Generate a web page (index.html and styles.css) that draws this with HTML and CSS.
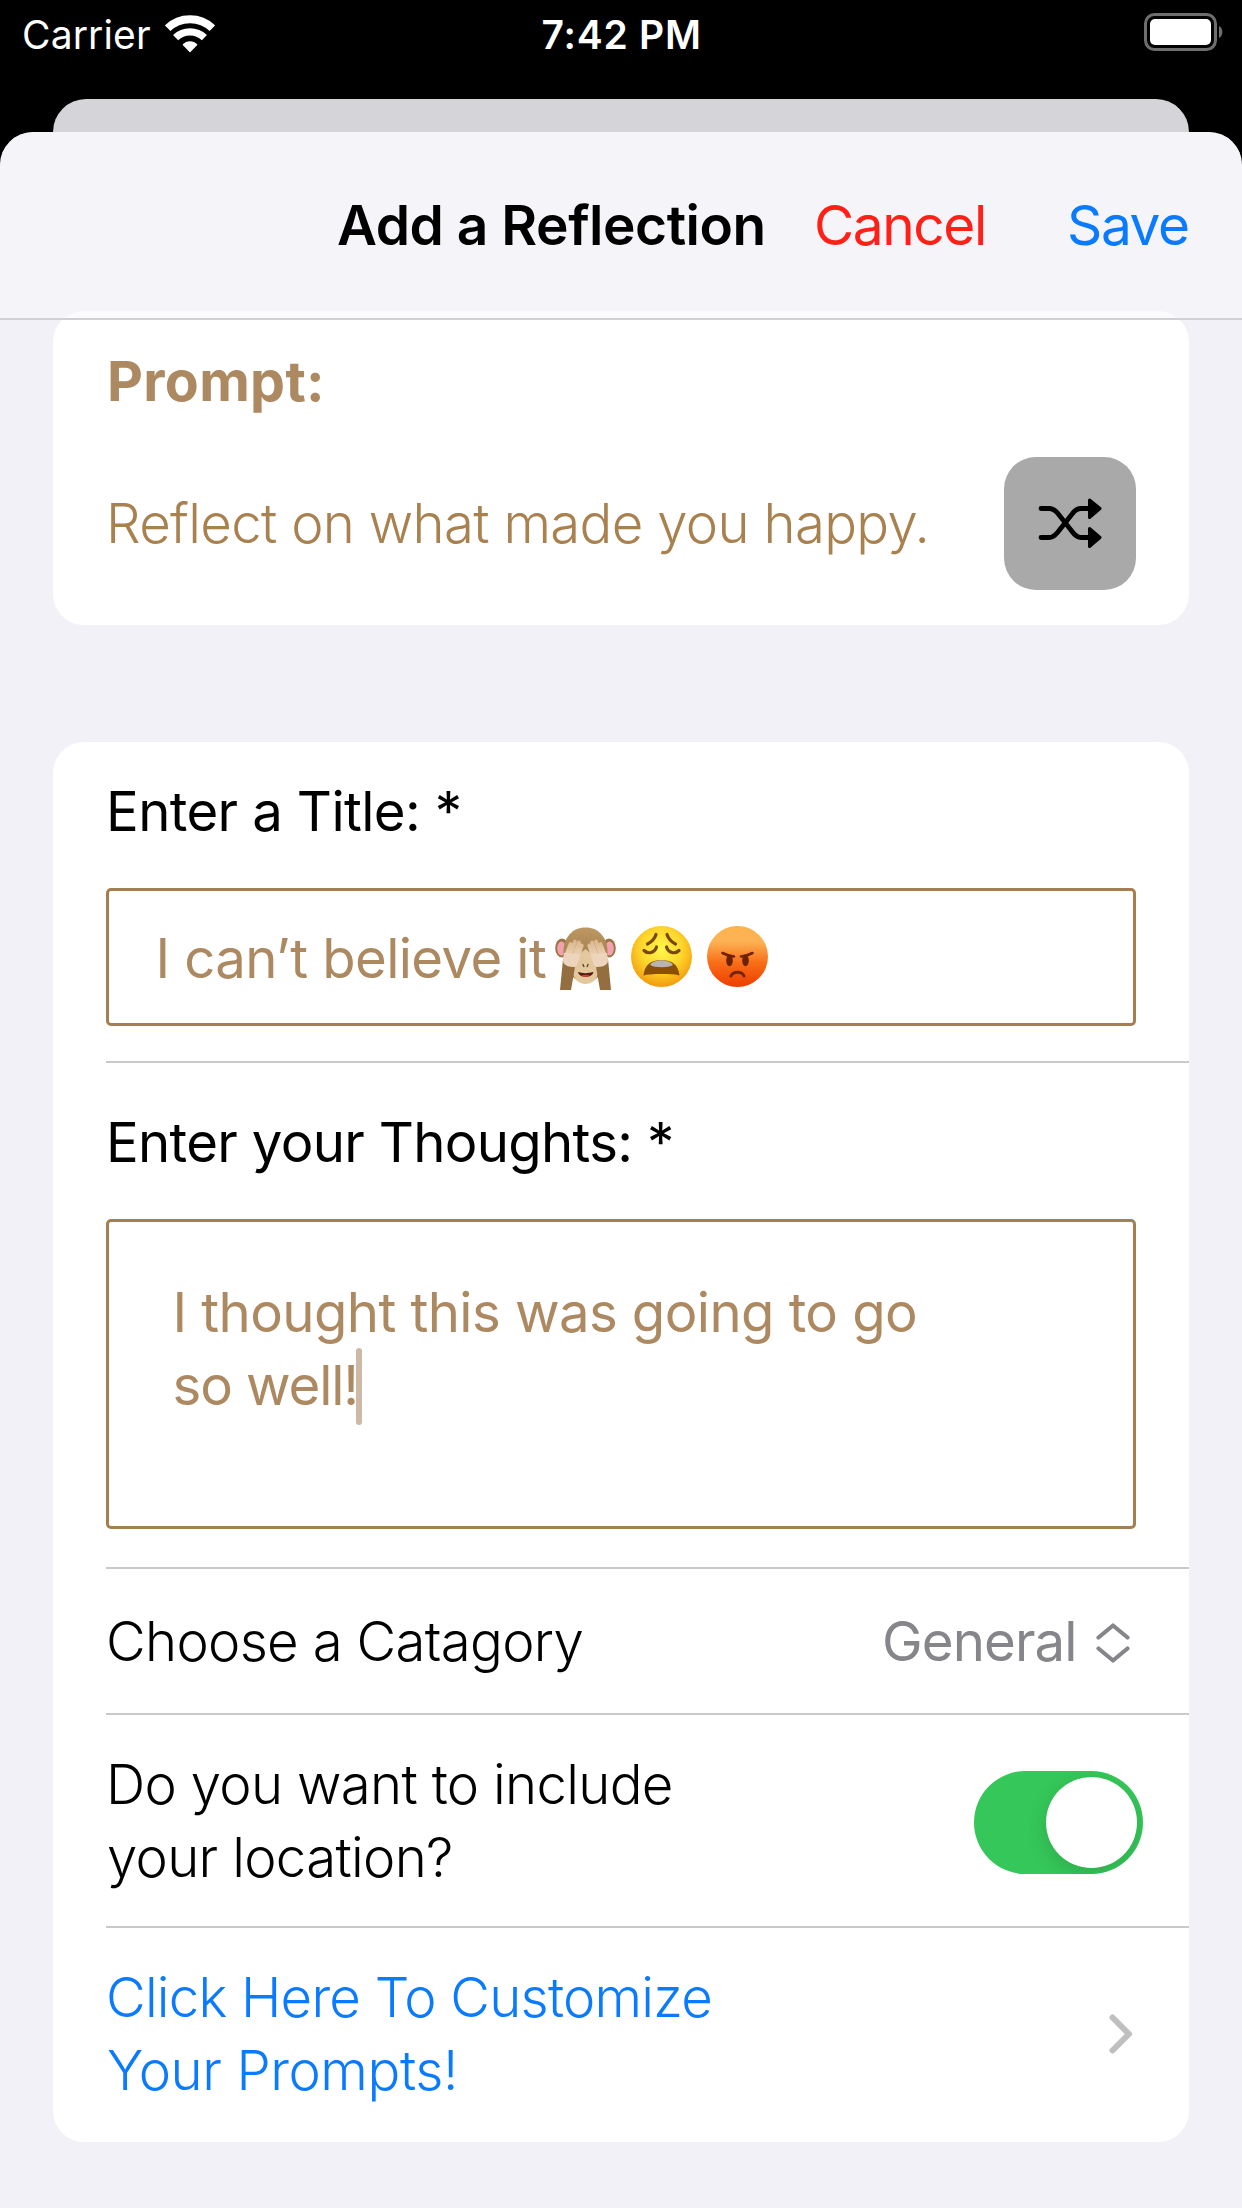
FILE: index.html
```html
<!DOCTYPE html>
<html lang="en">
<head>
<meta charset="utf-8">
<title>Add a Reflection</title>
<link rel="stylesheet" href="styles.css">
</head>
<body>
<header class="status">
  <div class="status-left">
    <span class="carrier">Carrier</span>
    <svg class="wifi" viewBox="0 0 50 38" width="50" height="38" fill="none" stroke="#fff">
      <path d="M2.600 13.200C15 1.200 35 1.200 47.400 13.200" stroke-width="8"/>
      <path d="M10.600 22.600C18.600 15 31.400 15 39.400 22.600" stroke-width="7.400"/>
      <path d="M17.500 29.700C21.600 25.200 28.400 25.200 32.500 29.700L25 37.500Z" fill="#fff" stroke="none"/>
    </svg>
  </div>
  <span class="time">7:42 PM</span>
  <svg class="battery" viewBox="0 0 79 38" width="79" height="38">
    <rect x="1.500" y="1.500" width="70" height="35" rx="9" fill="none" stroke="#6e6e6e" stroke-width="3"/>
    <rect x="6" y="6" width="61" height="26" rx="5" fill="#fff"/>
    <path d="M75 13c4.500 2 4.500 10 0 12z" fill="#6e6e6e"/>
  </svg>
</header>
<div class="backdrop-card"></div>
<main class="sheet">
  <nav class="nav">
    <h1 class="nav-title">Add a Reflection</h1>
    <span class="cancel">Cancel</span>
    <span class="save">Save</span>
  </nav>

  <section class="card prompt-card">
    <h2 class="prompt-label">Prompt:</h2>
    <div class="prompt-row">
      <span class="prompt-text">Reflect on what made you happy.</span>
      <span class="shuffle">
        <svg viewBox="0 0 64 52" width="64" height="52" fill="none" stroke="#000" stroke-width="4.800" stroke-linecap="round" stroke-linejoin="round">
          <path d="M3 11.500H11C15 11.500 17 13 19.500 16L34.500 35C37 38.500 39 40.500 43 40.500H50"/>
          <path d="M3 40.500H11C15 40.500 17 38.500 19.500 35.500L34.500 16.500C37 13 39 11.500 43 11.500H50"/>
          <path d="M51.500 3L62 11.500L51.500 20.500ZM51.500 31.500L62 40.500L51.500 49.500Z" fill="#000" stroke-width="3"/>
        </svg>
      </span>
    </div>
  </section>

  <section class="card form-card">
    <div class="row title-row">
      <span class="field-label label-title">Enter a Title: *</span>
      <div class="field title-field">
        <span class="title-value">I can’t believe it</span>
        <svg class="emoji" viewBox="0 0 214 68" width="214" height="68">
          <defs>
            <linearGradient id="fur" x1="0" y1="0" x2="0" y2="1"><stop offset="0" stop-color="#bd9863"/><stop offset="1" stop-color="#8f6b3d"/></linearGradient>
            <linearGradient id="hand" gradientUnits="userSpaceOnUse" x1="0" y1="15" x2="0" y2="42"><stop offset="0" stop-color="#d8b68a"/><stop offset=".6" stop-color="#edd3b8"/><stop offset="1" stop-color="#efd9c4"/></linearGradient>
            <radialGradient id="yellow" cx=".5" cy=".38" r=".62"><stop offset="0" stop-color="#fff84a"/><stop offset=".55" stop-color="#fed62c"/><stop offset="1" stop-color="#f39a0c"/></radialGradient>
            <linearGradient id="red" x1="0" y1="0" x2="0" y2="1"><stop offset="0" stop-color="#fdb24b"/><stop offset=".25" stop-color="#fdb355"/><stop offset=".6" stop-color="#f86e18"/><stop offset="1" stop-color="#ee3d00"/></linearGradient>
          </defs>
          <g>
            <ellipse cx="7" cy="23" rx="6.800" ry="9.500" fill="#9c7544"/>
            <ellipse cx="54" cy="23" rx="6.800" ry="9.500" fill="#9c7544"/>
            <ellipse cx="6.500" cy="23.500" rx="4.300" ry="7" fill="#f2a2ae"/>
            <ellipse cx="54.500" cy="23.500" rx="4.300" ry="7" fill="#f2a2ae"/>
            <path d="M30.500 2.500C17 2.500 8.500 13 8.500 27C8.500 41 16 52 22 55H39C45 52 52.500 41 52.500 27C52.500 13 44 2.500 30.500 2.500Z" fill="url(#fur)"/>
            <path d="M30.500 24C26 27 18 36 18 47C18 54 24 59 30.500 59S43 54 43 47C43 36 35 27 30.500 24Z" fill="#e3c89d"/>
            <path d="M23 47C28 48.500 33 48.500 38.500 47C37 53.500 24.500 53.500 23 47Z" fill="#571b16"/>
            <path d="M26 50.500Q30.500 49 35 50.500Q30.500 53.500 26 50.500Z" fill="#d33c3c"/>
            <path d="M28 39.500l.8 2M33 39.500l-.8 2" stroke="#65472d" stroke-width="1.400" stroke-linecap="round"/>
            <path d="M8 34L5 65H16L20.500 39ZM53 34L56 65H45L40.500 39Z" fill="#946e3e"/>
            <g fill="none" stroke="url(#hand)" stroke-width="3.800" stroke-linecap="round">
              <path d="M10.500 32L15.500 19M14.500 32L20 16.500M18.500 33L24 17.500M22 34L26.800 20.500"/>
              <path d="M50.500 32L45.500 19M46.500 32L41 16.500M42.500 33L37 17.500M39 34L34.200 20.500"/>
            </g>
            <path d="M9 28L23 29C24 34 23.500 39 20 42C15 42 8.500 41 8 36ZM52 28L38 29C37 34 37.500 39 41 42C46 42 52.500 41 53 36Z" fill="#edd5bd"/>
          </g>
          <g>
            <circle cx="106.500" cy="31.500" r="30.500" fill="url(#yellow)"/>
            <g fill="none" stroke="#7b4708" stroke-width="3.200" stroke-linecap="round">
              <path d="M101 9.500C99.500 14 96.500 17 92.500 19M112 9.500C113.500 14 116.500 17 120.500 19"/>
              <path d="M89 25.500C93 29.500 99.500 28 101.500 22M124 25.500C120 29.500 113.500 28 111.500 22"/>
            </g>
            <path d="M88.500 50.500C89.500 39.500 96 35 106.500 35S123.500 39.500 124.500 50.500C119 48.500 94 48.500 88.500 50.500Z" fill="#8b5005"/>
            <path d="M95 40C99 33.800 114 33.800 118 40C113 43 100 43 95 40Z" fill="#b9b5ae"/>
          </g>
          <g>
            <circle cx="182.500" cy="31.500" r="30.500" fill="url(#red)"/>
            <path d="M167.500 28C171 30 175 31 179 31.500M197.500 28C194 30 190 31 186 31.500" fill="none" stroke="#762301" stroke-width="2.600" stroke-linecap="round"/>
            <ellipse cx="174.500" cy="35.500" rx="3.300" ry="5.800" fill="#6b2102"/>
            <ellipse cx="190.500" cy="35.500" rx="3.300" ry="5.800" fill="#6b2102"/>
            <path d="M176 51C178 46 187 46 189 51" fill="none" stroke="#762301" stroke-width="3" stroke-linecap="round"/>
          </g>
        </svg>
      </div>
    </div>
    <div class="row thoughts-row">
      <span class="field-label label-thoughts">Enter your Thoughts: *</span>
      <div class="field thoughts-field">
        <span class="thoughts-first">I thought this was going to go</span>
        <div class="thoughts-last"><span class="thoughts-second">so well!</span><i class="caret"></i></div>
      </div>
    </div>
    <div class="row category-row">
      <span class="category">Choose a Catagory</span>
      <span class="category-value">General</span>
      <svg class="updown" viewBox="0 0 34 40" width="34" height="40" fill="none" stroke="#85858a" stroke-width="4.200" stroke-linecap="round" stroke-linejoin="round">
        <path d="M2.500 14.500L17 2.500L31.500 14.500M2.500 25.500L17 37.500L31.500 25.500"/>
      </svg>
    </div>
    <div class="row location-row">
      <div class="lines"><span class="location-a">Do you want to include</span><span class="location-b">your location?</span></div>
      <span class="toggle"><i class="knob"></i></span>
    </div>
    <div class="row link-row">
      <div class="lines link"><span class="link-a">Click Here To Customize</span><span class="link-b">Your Prompts!</span></div>
      <svg class="chevron" viewBox="0 0 24 40" width="24" height="40" fill="none" stroke="#bfbfbf" stroke-width="6" stroke-linecap="round" stroke-linejoin="round">
        <path d="M3.500 3.500L20 20L3.500 36.500"/>
      </svg>
    </div>
  </section>
</main>
</body>
</html>
```
FILE: styles.css
```css
* { box-sizing: border-box; }

body {
  margin: 0;
  height: 2208px;
  display: flex;
  flex-direction: column;
  overflow: hidden;
  background: #000;
  color: #000;
  font: 400 54.5px/73px Inter, "Liberation Sans", sans-serif;
  white-space: nowrap;
  font-kerning: normal;
}

h1, h2 { margin: 0; font-size: inherit; }

/* status bar */
.status {
  height: 99px;
  padding: 0 19px 0 22px;
  display: grid;
  grid-template-columns: 519.6px 1fr auto;
  align-items: start;
  color: #fff;
  font-size: 39px;
  line-height: 69px;
}
.status-left { display: flex; gap: 14.5px; }
.carrier { letter-spacing: 0.14px; }
.wifi { margin-top: 14.5px; }
.time { font-weight: 600; letter-spacing: 0.76px; }
.battery { margin-top: 13px; }

.backdrop-card {
  height: 33px;
  margin: 0 53px;
  border-radius: 33px 33px 0 0;
  background: #d5d4d9;
}

/* sheet */
.sheet {
  flex: 1;
  overflow: hidden;
  border-radius: 33px 33px 0 0;
  background: #f2f1f7;
}
.nav {
  position: relative;
  z-index: 1;
  height: 188px;
  padding-left: 337px;
  display: flex;
  align-items: center;
  background: rgba(248, 248, 252, 0.54);
  border-bottom: 2px solid #d0d0d4;
  font-size: 55px;
}
.nav-title { width: 477px; font-weight: 600; letter-spacing: -0.46px; }
.cancel { width: 253px; color: #ff2018; letter-spacing: -1.41px; }
.save { color: #0a7aff; letter-spacing: -1.4px; }

.card {
  margin: 0 53px;
  border-radius: 31px;
  background: #fff;
}

/* prompt */
.prompt-card {
  height: 314px;
  margin-top: -9px;
  padding: 33px 53px 0;
  color: #ad8961;
}
.prompt-label {
  font-size: 55.5px;
  font-weight: 700;
  letter-spacing: 0.3px;
  padding-left: 1px;
}
.prompt-row {
  margin-top: 39.5px;
  display: flex;
  align-items: center;
  justify-content: space-between;
}
.prompt-text { font-weight: 300; color: #a8814f; letter-spacing: -0.68px; }
.shuffle {
  width: 132px;
  height: 133px;
  display: flex;
  align-items: center;
  justify-content: center;
  border-radius: 32px;
  background: #a9a9a9;
}

/* form */
.form-card { margin-top: 117px; height: 1400px; padding-left: 53px; }
.row { padding-right: 53px; }
.row + .row { border-top: 2px solid #c9c9cb; }
.field-label { display: block; font-size: 54.5px; }
.field { border: 3px solid #a57f50; border-radius: 5px; color: #ad8961; }

.title-row { height: 319px; padding-top: 32.5px; }
.label-title { letter-spacing: -0.62px; }
.title-field {
  height: 138px;
  margin-top: 40px;
  padding-left: 46.5px;
  display: flex;
  align-items: center;
}
.title-value { width: 399.5px; padding-top: 3px; letter-spacing: -0.6px; }
.emoji { margin-top: 5px; }

.thoughts-row { height: 506px; padding-top: 42.5px; }
.label-thoughts { letter-spacing: -0.68px; }
.thoughts-field {
  height: 310px;
  margin-top: 40.5px;
  padding: 54px 0 0 63.500px;
}
.thoughts-first { display: block; letter-spacing: -0.58px; }
.thoughts-last { display: flex; }
.thoughts-second { width: 183px; letter-spacing: -1.1px; }
.caret {
  width: 6.5px;
  height: 77px;
  margin-top: -1px;
  border-radius: 3px;
  background: #cdb9a6;
}

.category-row { height: 146px; padding-top: 1px; display: flex; align-items: center; }
.category { width: 776px; font-weight: 300; letter-spacing: -0.68px; }
.category-value { width: 214px; color: #85858a; letter-spacing: -0.87px; }
.updown { margin-top: 2px; }

.lines { display: flex; flex-direction: column; font-weight: 300; }
.location-row, .link-row {
  display: flex;
  align-items: center;
  justify-content: space-between;
}
.location-row { height: 213px; padding-right: 46px; }
.location-a { letter-spacing: -0.68px; }
.location-b { padding-left: 1px; letter-spacing: -0.68px; }
.toggle {
  width: 169px;
  height: 103px;
  margin-top: 3px;
  padding: 6px;
  display: flex;
  justify-content: flex-end;
  overflow: hidden;
  border-radius: 52px;
  background: #35c759;
}
.knob {
  width: 91px;
  height: 91px;
  border-radius: 50%;
  background: #fff;
  box-shadow: 0 6px 20px rgba(0, 0, 0, 0.14);
}

.link-row { height: 214px; padding-right: 56px; }
.link { color: #0a7aff; }
.link-a { letter-spacing: -0.78px; }
.link-b { padding-left: 1px; letter-spacing: -0.41px; }
```
